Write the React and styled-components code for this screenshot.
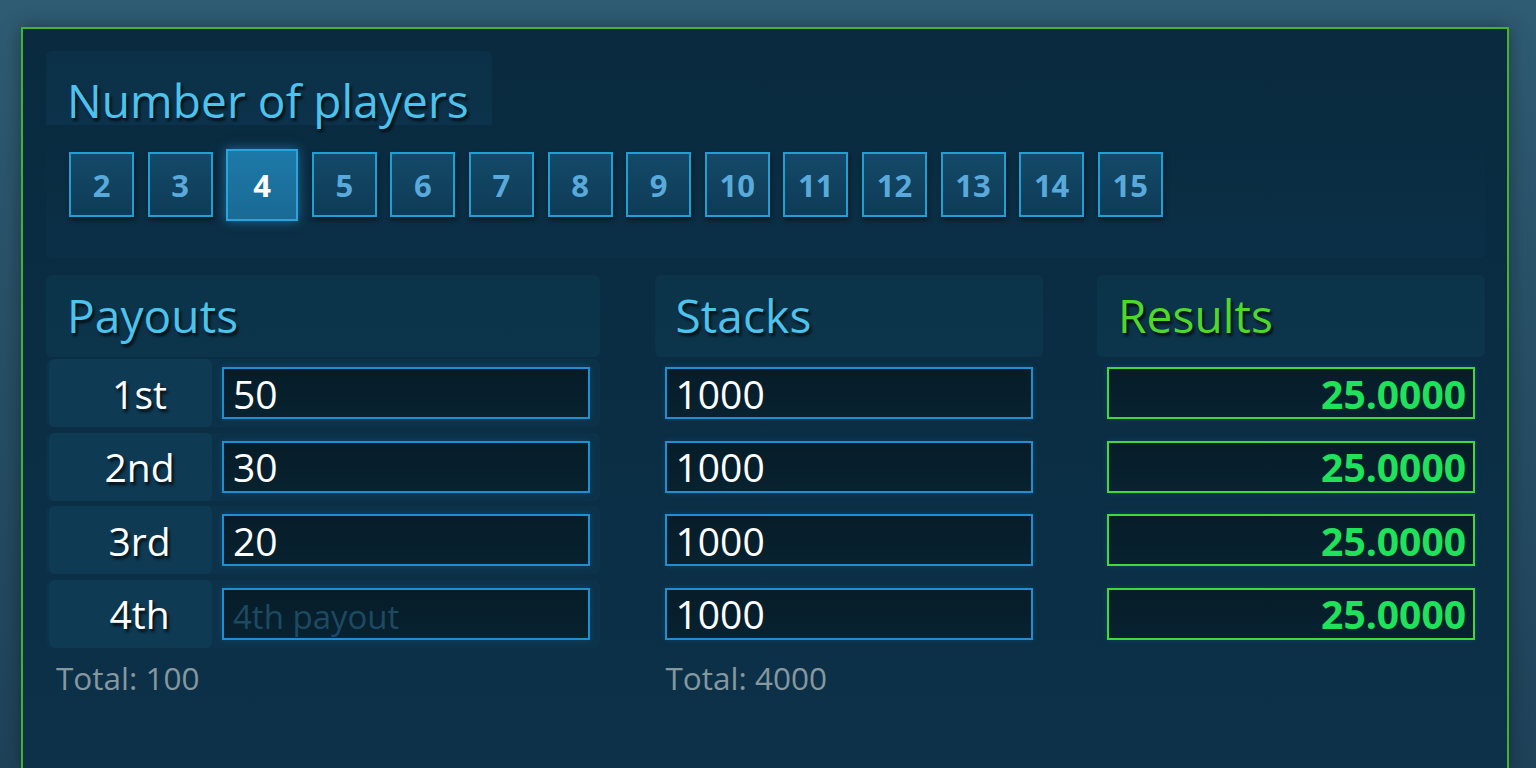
import React from "react";
import styled, { createGlobalStyle, css } from "styled-components";

const Global = createGlobalStyle`
  html, body { margin: 0; padding: 0; }
  body {
    width: 1536px;
    height: 768px;
    overflow: hidden;
    background: linear-gradient(180deg, #2f5c73 0%, #285067 40%, #1f4259 100%);
    font-family: "Open Sans", "Noto Sans", sans-serif;
  }
`;

const Page = styled.div`
  padding: 27px 27px 0 21px;
  height: 768px;
  box-sizing: border-box;
`;

const Panel = styled.div`
  border: 2px solid #46b22c;
  border-bottom: none;
  height: 741px;
  box-sizing: border-box;
  background: linear-gradient(180deg, #092a3f 0%, #0a2d43 40%, #0c3148 100%);
  box-shadow: 0 0 18px rgba(0, 0, 0, 0.35);
  padding: 22px 22px 0 23px;
  display: flex;
  flex-direction: column;
`;

const PlayersBlock = styled.section`
  display: flex;
  flex-direction: column;
`;

const HeaderBox = styled.div`
  align-self: flex-start;
  width: 446px;
  height: 74px;
  box-sizing: border-box;
  padding: 24px 0 0 21px;
  display: flex;
  align-items: center;
  background: linear-gradient(180deg, #0b3047 0%, #0c334b 100%);
  border-radius: 6px 6px 0 0;
`;

const Title = styled.h2`
  margin: 0;
  font-weight: 400;
  font-size: ${(p) => p.$size || 46}px;
  line-height: 1;
  color: ${(p) => (p.$green ? "#4fd82a" : "#4cc2ec")};
  text-shadow: 2px 3px 3px rgba(0, 0, 0, 0.75);
  letter-spacing: 0.1px;
`;

const ButtonArea = styled.div`
  display: flex;
  align-items: center;
  gap: 13.6px;
  padding: 27px 0 41px 23px;
  background: linear-gradient(180deg, rgba(12, 51, 75, 0) 0%, rgba(14, 56, 80, 0.3) 100%);
  border-radius: 0 6px 6px 6px;
`;

const NumButton = styled.button`
  width: 65px;
  height: 65px;
  flex: none;
  box-sizing: border-box;
  border: 2px solid #1ea0d4;
  background: linear-gradient(180deg, #134a68 0%, #0e3b57 100%);
  color: #5aa9db;
  font-family: "Open Sans", "Noto Sans", sans-serif;
  font-weight: 700;
  font-size: 31px;
  padding: 0;
  display: flex;
  align-items: center;
  justify-content: center;
  box-shadow: 1px 3px 5px rgba(0, 0, 0, 0.45);
  cursor: pointer;
  ${(p) =>
    p.$active &&
    css`
      width: 72px;
      height: 72px;
      margin: -3.5px 0;
      background: linear-gradient(180deg, #1d79a8 0%, #1a6a95 100%);
      border-color: #27a6de;
      color: #ffffff;
      box-shadow: 0 0 10px rgba(40, 160, 230, 0.55);
    `}
`;

const Columns = styled.div`
  display: grid;
  grid-template-columns: 554px 388px 388px;
  column-gap: 54.5px;
  margin-top: 17px;
`;

const Column = styled.div`
  display: flex;
  flex-direction: column;
`;

const ColHeader = styled.div`
  height: 82px;
  box-sizing: border-box;
  padding: 0 0 2px 21px;
  display: flex;
  align-items: center;
  background: linear-gradient(180deg, #0b3449 0%, #0c354c 100%);
  border-radius: 6px;
`;

const Rows = styled.div`
  display: flex;
  flex-direction: column;
  gap: 5.5px;
  margin-top: 2px;
`;

const Row = styled.div`
  height: 68px;
  display: flex;
  align-items: center;
  gap: 10px;
  padding: 0 10px 0 3px;
  border-radius: 6px;
  background: ${(p) => (p.$plain ? "transparent" : "rgba(14, 58, 82, 0.4)")};
  ${(p) => p.$plain && css`padding: 0 10px;`}
`;

const Label = styled.div`
  width: 163px;
  height: 68px;
  flex: none;
  box-sizing: border-box;
  padding-left: 18px;
  display: flex;
  align-items: center;
  justify-content: center;
  background: #0e3a53;
  border-radius: 6px;
  color: #ffffff;
  font-size: 39px;
  text-shadow: 2px 3px 3px rgba(0, 0, 0, 0.75);
`;

const Field = styled.input`
  flex: 1;
  min-width: 0;
  height: 52px;
  box-sizing: border-box;
  border: 2px solid ${(p) => (p.$green ? "#3fd93c" : "#1f8fd2")};
  background: linear-gradient(180deg, #061c29 0%, #08222f 100%);
  color: ${(p) => (p.$green ? "#1fe25a" : "#ffffff")};
  font-family: "Open Sans", "Noto Sans", sans-serif;
  font-size: 39px;
  font-weight: ${(p) => (p.$green ? 700 : 400)};
  text-align: ${(p) => (p.$green ? "right" : "left")};
  padding: 0 ${(p) => (p.$green ? 7 : 9)}px 0 9px;
  outline: none;
  box-shadow: 0 0 6px rgba(30, 120, 190, 0.25);
  &::placeholder {
    color: #1d4a62;
    font-size: 33px;
  }
`;

const Total = styled.div`
  margin-top: 10px;
  padding-left: ${(p) => p.$indent || 10}px;
  color: #85979f;
  font-size: 31.5px;
  line-height: 40px;
`;

const places = ["1st", "2nd", "3rd", "4th"];
const payouts = ["50", "30", "20", ""];
const stacks = ["1000", "1000", "1000", "1000"];
const results = ["25.0000", "25.0000", "25.0000", "25.0000"];
const nums = [2, 3, 4, 5, 6, 7, 8, 9, 10, 11, 12, 13, 14, 15];

export default function App() {
  return (
    <>
      <Global />
      <Page>
        <Panel>
          <PlayersBlock>
            <HeaderBox>
              <Title>Number of players</Title>
            </HeaderBox>
            <ButtonArea>
              {nums.map((n) => (
                <NumButton key={n} $active={n === 4}>
                  {n}
                </NumButton>
              ))}
            </ButtonArea>
          </PlayersBlock>

          <Columns>
            <Column>
              <ColHeader>
                <Title>Payouts</Title>
              </ColHeader>
              <Rows>
                {places.map((p, i) => (
                  <Row key={p}>
                    <Label>{p}</Label>
                    <Field
                      readOnly
                      value={payouts[i]}
                      placeholder={`${p} payout`}
                    />
                  </Row>
                ))}
              </Rows>
              <Total>Total: 100</Total>
            </Column>

            <Column>
              <ColHeader>
                <Title>Stacks</Title>
              </ColHeader>
              <Rows>
                {stacks.map((s, i) => (
                  <Row key={i} $plain>
                    <Field readOnly value={s} />
                  </Row>
                ))}
              </Rows>
              <Total $indent={11}>Total: 4000</Total>
            </Column>

            <Column>
              <ColHeader>
                <Title $green>Results</Title>
              </ColHeader>
              <Rows>
                {results.map((r, i) => (
                  <Row key={i} $plain>
                    <Field readOnly value={r} $green />
                  </Row>
                ))}
              </Rows>
            </Column>
          </Columns>
        </Panel>
      </Page>
    </>
  );
}
